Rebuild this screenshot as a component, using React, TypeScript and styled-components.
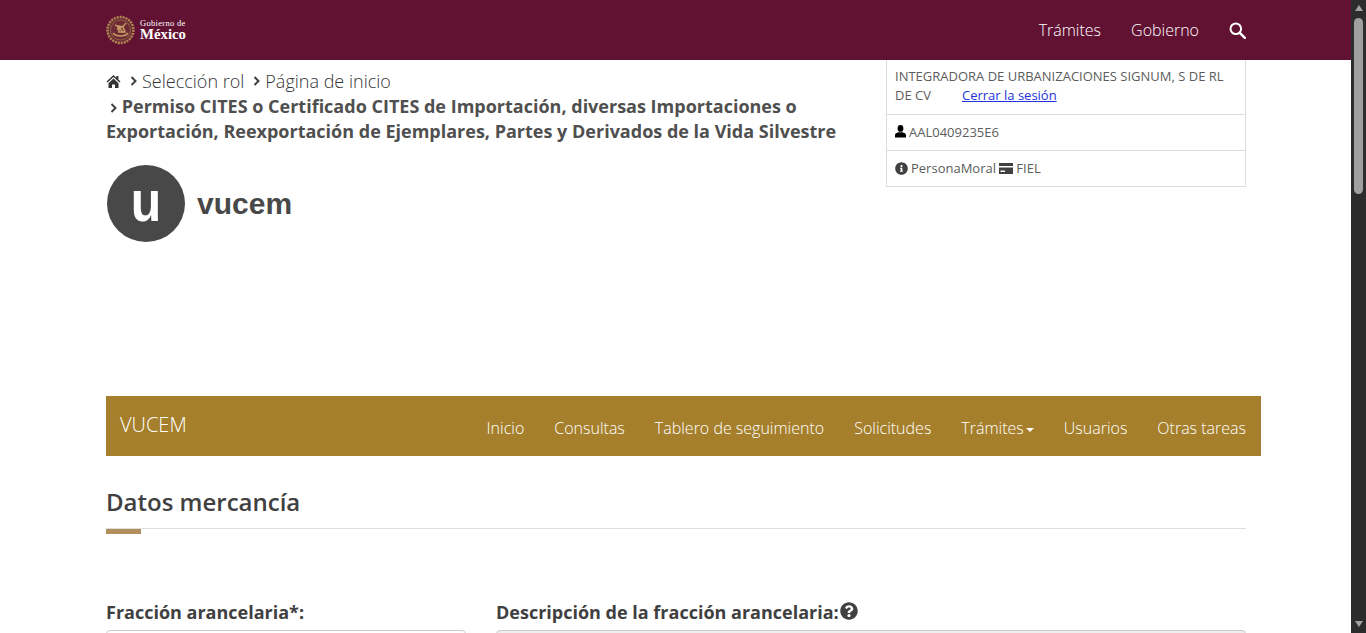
import styled, { createGlobalStyle } from 'styled-components';
import { FaInfoCircle, FaQuestionCircle } from 'react-icons/fa';

const Global = createGlobalStyle`
  html, body { margin: 0; padding: 0; height: 633px; overflow: hidden; background: #fff; }
  body { font-family: "Open Sans", "Noto Sans", sans-serif; color: #404041; }
  * { box-sizing: border-box; }
`

const Viewport = styled.div`
  display: flex;
  width: 1366px;
  height: 633px;
  overflow: hidden;
`

const Page = styled.div`
  width: 1351px;
  flex: none;
`

const TopBar = styled.header`
  height: 60px;
  background: #611232;
  padding: 0 105px 0 106px;
  display: flex;
  align-items: center;
  justify-content: space-between;
`

const Brand = styled.div`
  display: flex;
  align-items: center;
  gap: 5px;
  color: #fff;
`

const BrandText = styled.div`
  display: flex;
  flex-direction: column;
  font-family: "Liberation Serif", serif;
  small { font-size: 8.5px; line-height: 8px; letter-spacing: 0.3px; }
  strong { font-size: 14.8px; line-height: 14px; font-weight: 700; }
`

const TopNav = styled.nav`
  display: flex;
  align-items: center;
  gap: 30px;
  a { color: #fff; font-size: 16px; font-weight: 300; }
`

const Content = styled.div`
  width: 1140px;
  margin-left: 106px;
`

const HeaderRow = styled.div`
  display: flex;
  justify-content: space-between;
  height: 336px;
`

const Crumbs = styled.div`
  width: 745px;
  padding-top: 8px;
`

const CrumbLine = styled.div`
  display: flex;
  align-items: center;
  gap: 5px;
  font-size: 18px;
  font-weight: 300;
  line-height: 26px;
  color: #333;
`

const Chevron = styled.svg`
  width: 7px;
  height: 10px;
  margin-left: 4px;
  flex: none;
`

const CrumbTitle = styled.div`
  font-size: 18px;
  font-weight: 700;
  line-height: 25px;
  color: #4f4f4f;
  svg { margin: 0 0 0 4px; }
`

const Logo = styled.div`
  display: flex;
  align-items: center;
  gap: 12px;
  margin-top: 21px;
  margin-left: 1px;
`

const LogoMark = styled.div`
  width: 78px;
  height: 77px;
  border-radius: 50%;
  background: #484848;
  display: flex;
  align-items: center;
  justify-content: center;
  color: #fff;
  font: 700 50px/1 "Liberation Sans", sans-serif;
  span { display: block; transform: scaleY(1.16); margin-top: -5px; }
`

const LogoWord = styled.span`
  font: 700 30px/1 "Liberation Sans", sans-serif;
  color: #484848;
`

const UserBox = styled.div`
  width: 360px;
  height: 127px;
  border: 1px solid #ddd;
  border-top: 0;
  font-size: 13px;
  color: #5c5c5c;
`

const UserRow = styled.div<{ $h: number }>`
  height: ${p => p.$h}px;
  padding: 0 8px 2px;
  display: flex;
  align-items: center;
  border-bottom: 1px solid #ddd;
  &:last-child { border-bottom: 0; }
  svg { flex: none; color: #404041; margin-right: 3px; }
`

const NameText = styled.div`
  line-height: 19px;
  a { color: #2233dd; text-decoration: underline; margin-left: 31px; }
`

const GoldBar = styled.nav`
  width: 1155px;
  height: 60px;
  background: #a57f2c;
  display: flex;
  justify-content: space-between;
  color: #fff;
  padding: 0 15px 0 14px;
`

const GoldBrand = styled.span`
  font-size: 20px;
  font-weight: 300;
  line-height: 58px;
`

const GoldLinks = styled.div`
  display: flex;
  gap: 30px;
  font-size: 16px;
  font-weight: 300;
  line-height: 64px;
`

const Caret = styled.span`
  display: inline-block;
  margin-left: 2px;
  vertical-align: middle;
  border-top: 4px solid #fff;
  border-left: 4px solid transparent;
  border-right: 4px solid transparent;
`

const Heading = styled.h2`
  margin: 28px 0 0;
  font-size: 24px;
  line-height: 36px;
  font-weight: 600;
  color: #404041;
  padding-bottom: 8px;
  border-bottom: 1px solid #ddd;
  position: relative;
  &::after {
    content: '';
    position: absolute;
    left: 0;
    bottom: -6px;
    width: 35px;
    height: 5px;
    background: #b38e5d;
  }
`

const FormRow = styled.div`
  display: grid;
  grid-template-columns: 360px 750px;
  column-gap: 30px;
  margin-top: 71px;
`

const Label = styled.label`
  display: flex;
  align-items: center;
  gap: 1px;
  font-size: 18px;
  font-weight: 700;
  line-height: 25px;
  color: #404041;
  svg { width: 18px; height: 18px; color: #404041; margin-top: -3px; }
`

const Input = styled.div<{ $disabled?: boolean }>`
  height: 36px;
  margin-top: 5px;
  border: 1px solid #ccc;
  border-radius: 4px;
  background: ${p => (p.$disabled ? '#eee' : '#fff')};
`

const Scrollbar = styled.div`
  width: 15px;
  flex: none;
  background: #2c2c2c;
  display: flex;
  flex-direction: column;
  align-items: center;
  justify-content: space-between;
  padding: 5px 0 6px;
  position: relative;
`

const Thumb = styled.div`
  position: absolute;
  top: 18px;
  left: 3px;
  width: 9px;
  height: 176px;
  background: #9f9f9f;
  border-radius: 5px;
`

const Arrow = styled.div<{ $down?: boolean }>`
  width: 0;
  height: 0;
  border-left: 4px solid transparent;
  border-right: 4px solid transparent;
  ${p => (p.$down ? 'border-top: 6px solid #a3a3a3;' : 'border-bottom: 6px solid #a3a3a3;')}
`

function Seal() {
  return (
    <svg width="29" height="30" viewBox="0 0 29 30">
      <circle cx="14.5" cy="15" r="13" fill="#6e2a35" stroke="#b08a54" strokeWidth="2.4" strokeDasharray="2 1" />
      <circle cx="14.5" cy="15" r="10" fill="none" stroke="#8f6343" strokeWidth="1" />
      <path d="M7 18c3 4 12 4 15 0M9 10c3 1 6 4 8 8M20 8c-2 4-6 5-9 6M12 11l5 1 2 5-6 0z" stroke="#c29a63" strokeWidth="1.6" fill="none" />
    </svg>
  );
}

function ChevronIcon() {
  return (
    <Chevron viewBox="0 0 7 10">
      <path d="M1.5 1l4 4-4 4" fill="none" stroke="#404041" strokeWidth="2" />
    </Chevron>
  );
}

function HomeIcon() {
  return (
    <svg width="15" height="15" viewBox="0 0 15 15">
      <path d="M7.5 1L0.5 7.6l1 1L7.5 3l6 5.6 1-1L12.4 5.6V2h-2v1.8z" fill="#333" />
      <path d="M2.5 9.2L7.5 4.6l5 4.6V14H9v-3.6H6V14H2.5z" fill="#333" />
    </svg>
  );
}

function SearchIcon() {
  return (
    <svg width="17" height="17" viewBox="0 0 17 17">
      <circle cx="6.8" cy="6.8" r="5.3" fill="none" stroke="#fff" strokeWidth="2" />
      <path d="M10.8 10.8l5 5" stroke="#fff" strokeWidth="2.6" strokeLinecap="round" />
    </svg>
  );
}

function UserIcon() {
  return (
    <svg width="11" height="13" viewBox="0 0 11 13">
      <ellipse cx="5.5" cy="3.4" rx="2.9" ry="3.4" />
      <path d="M0 12.5V10c0-1.4 1.6-2 3.6-2.7h3.8C9.4 8 11 8.6 11 10v2.5z" />
    </svg>
  );
}

function CardIcon() {
  return (
    <svg width="14" height="11" viewBox="0 0 14 11">
      <path d="M0 0h14v3H0zM0 4.500h14V11H0z" fill="#404041" />
      <path d="M1.500 7.500h4.500v1.500H1.500z" fill="#fff" />
    </svg>
  );
}

export default function App() {
  return (
    <Viewport>
      <Global />
      <Page>
        <TopBar>
          <Brand>
            <Seal />
            <BrandText>
              <small>Gobierno de</small>
              <strong>México</strong>
            </BrandText>
          </Brand>
          <TopNav>
            <a>Trámites</a>
            <a>Gobierno</a>
            <SearchIcon />
          </TopNav>
        </TopBar>
        <Content>
          <HeaderRow>
            <Crumbs>
              <CrumbLine>
                <HomeIcon />
                <ChevronIcon />
                <span>Selección rol</span>
                <ChevronIcon />
                <span>Página de inicio</span>
              </CrumbLine>
              <CrumbTitle>
                <ChevronIcon />
                {' '}Permiso CITES o Certificado CITES de Importación, diversas Importaciones o Exportación, Reexportación de Ejemplares, Partes y Derivados de la Vida Silvestre
              </CrumbTitle>
              <Logo>
                <LogoMark><span>u</span></LogoMark>
                <LogoWord>vucem</LogoWord>
              </Logo>
            </Crumbs>
            <UserBox>
              <UserRow $h={55}>
                <NameText>
                  INTEGRADORA DE URBANIZACIONES SIGNUM, S DE RL DE CV
                  <a>Cerrar la sesión</a>
                </NameText>
              </UserRow>
              <UserRow $h={36}><UserIcon />AAL0409235E6</UserRow>
              <UserRow $h={36}>
                <FaInfoCircle size={13} />PersonaMoral&nbsp;<CardIcon />FIEL
              </UserRow>
            </UserBox>
          </HeaderRow>
          <GoldBar>
            <GoldBrand>VUCEM</GoldBrand>
            <GoldLinks>
              <span>Inicio</span>
              <span>Consultas</span>
              <span>Tablero de seguimiento</span>
              <span>Solicitudes</span>
              <span>Trámites<Caret /></span>
              <span>Usuarios</span>
              <span>Otras tareas</span>
            </GoldLinks>
          </GoldBar>
          <Heading>Datos mercancía</Heading>
          <FormRow>
            <div>
              <Label>Fracción arancelaria*:</Label>
              <Input />
            </div>
            <div>
              <Label>Descripción de la fracción arancelaria:<FaQuestionCircle /></Label>
              <Input $disabled />
            </div>
          </FormRow>
        </Content>
      </Page>
      <Scrollbar>
        <Arrow />
        <Thumb />
        <Arrow $down />
      </Scrollbar>
    </Viewport>
  );
}
